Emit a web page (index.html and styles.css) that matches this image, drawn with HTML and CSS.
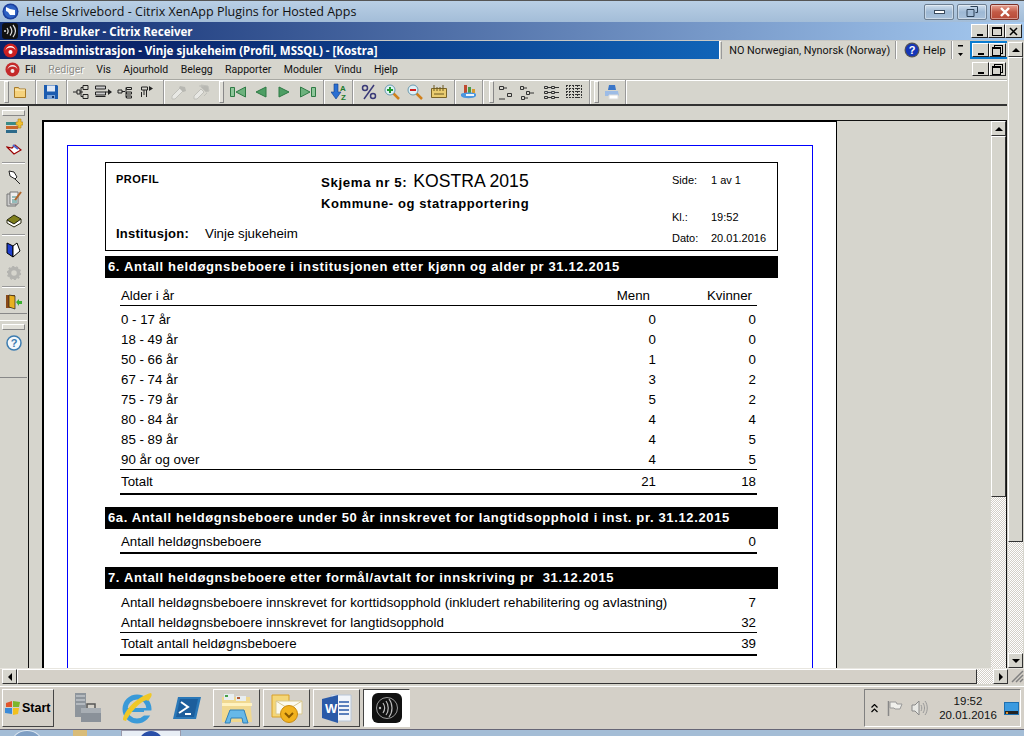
FILE: index.html
```html
<!DOCTYPE html>
<html lang="no">
<head>
<meta charset="utf-8">
<title>Profil</title>
<link rel="stylesheet" href="styles.css">
</head>
<body>
<div class="screen">
  <header class="aero">
    <svg class="aero-icon" width="17" height="17" viewBox="0 0 17 17"><circle cx="8.5" cy="8.5" r="8" fill="#1c3f9c"/><circle cx="8.5" cy="8.5" r="6.5" fill="#2f62c4"/><path d="M4 4l4 2 5 1v5H8L6 9 4 8z" fill="#fff"/></svg>
    <span class="aero-title">Helse Skrivebord - Citrix XenApp Plugins for Hosted Apps</span>
    <div class="aero-btns">
      <div class="aero-btn"><span class="aero-min"></span></div>
      <div class="aero-btn"><svg width="12" height="11" viewBox="0 0 12 11"><path d="M4.5.5h7v6h-2M1 3.5h7v7H1z" fill="none" stroke="#2a3f55"/></svg></div>
      <div class="aero-btn aero-close"><svg width="12" height="10" viewBox="0 0 12 10"><path d="M2 1l8 8M10 1L2 9" stroke="#fff" stroke-width="2.4"/></svg></div>
    </div>
  </header>

  <div class="citrix-bar">
    <svg class="citrix-icon" width="16" height="16" viewBox="0 0 16 16"><rect width="16" height="16" rx="3" fill="#111"/><path d="M5 5c1.500 2 1.500 4 0 6M8 3.500c2.500 3 2.500 6 0 9M11 2c3.300 4 3.300 8 0 12" fill="none" stroke="#ddd" stroke-width="1.200"/><circle cx="3" cy="8" r="1" fill="#ddd"/></svg>
    <span class="bar-title">Profil - Bruker - Citrix Receiver</span>
    <div class="win-btns">
      <div class="win-btn"><span class="glyph-min"></span></div>
      <div class="win-btn"><span class="glyph-max"></span></div>
      <div class="win-btn"><svg width="9" height="9" viewBox="0 0 9 9"><path d="M1 1l7 7M8 1L1 8" stroke="#000" stroke-width="1.500"/></svg></div>
    </div>
  </div>

  <div class="app">
    <div class="app-main">
      <div class="title-row">
        <div class="app-title">
          <svg class="logo" width="15" height="15" viewBox="0 0 15 15"><circle cx="7.500" cy="7.500" r="7" fill="#cc2020"/><path d="M2.500 8a5 5 0 0 1 10 0 5 3.500 0 0 0-10 0z" fill="#fff"/><circle cx="7.500" cy="9" r="2" fill="#fff"/></svg>
          <span class="bar-title">Plassadministrasjon - Vinje sjukeheim (Profil, MSSQL) - [Kostra]</span>
        </div>
        <div class="grip-v"></div>
        <span class="lang">NO Norwegian, Nynorsk (Norway)</span>
        <div class="sep-h"></div>
        <svg class="help-icon" width="16" height="16" viewBox="0 0 16 16"><circle cx="8" cy="8" r="7.500" fill="#555"/><circle cx="8" cy="8" r="6.300" fill="#1536b8"/><text x="8" y="12" font-size="11" font-weight="700" fill="#fff" text-anchor="middle" font-family="Liberation Sans">?</text></svg>
        <span class="help">Help</span>
        <div class="sep-h sep-help"></div>
        <svg class="chev" width="7" height="16" viewBox="0 0 7 16"><path d="M1 3h5v1.500H1zM1 11h5L3.500 14z" fill="#000"/></svg>
        <div class="mdi-focus">
          <div class="win-btn"><span class="glyph-min"></span></div>
          <div class="win-btn"><span class="glyph-restore"></span></div>
        </div>
      </div>

      <div class="menu">
        <svg class="logo menu-logo" width="15" height="15" viewBox="0 0 15 15"><circle cx="7.500" cy="7.500" r="7" fill="#c42a2a"/><path d="M2.500 8a5 5 0 0 1 10 0 5 3.500 0 0 0-10 0z" fill="#eee"/><circle cx="7.500" cy="9" r="2" fill="#eee"/></svg>
        <div class="menu-items">
          <span>Fil</span><span class="disabled">Rediger</span><span>Vis</span><span>Ajourhold</span><span>Belegg</span><span>Rapporter</span><span>Moduler</span><span>Vindu</span><span>Hjelp</span>
        </div>
        <div class="menu-btns">
          <div class="win-btn"><span class="glyph-min"></span></div>
          <div class="win-btn"><span class="glyph-restore"></span></div>
        </div>
      </div>

      <div class="toolbar">
        <div class="grip-t ml4"></div>
        <svg class="ml3" width="16" height="16" viewBox="0 0 16 16"><path d="M2.500 13.500v-10h4l1 1.500h6v8.500z" fill="#f5d27e" stroke="#a87a28"/><path d="M3 6h10" stroke="#fff1c4"/></svg>
        <div class="sep ml7"></div>
        <svg class="ml6" width="16" height="16" viewBox="0 0 16 16"><path d="M1 1h13l1 1v13H1z" fill="#1c5cb0"/><path d="M4 1.500h8v6H4z" fill="#dfe8f5"/><path d="M4 11h8v4H4z" fill="#7ba4d8"/><path d="M9 12h2v2H9z" fill="#12356e"/></svg>
        <div class="sep ml7"></div>
        <svg class="ml5" width="16" height="16" viewBox="0 0 16 16"><path d="M10 1.500h5v4h-5zM10 10.500h5v4h-5zM0 8h4M4 6v4h3V6zM7 8h3M8 3.500h2M8 3.500v9h2" fill="none" stroke="#222"/></svg>
        <svg class="ml6" width="17" height="16" viewBox="0 0 17 16"><path d="M.5 2h10v3H.5zM.5 8h10v3H.5zM.5 12.500h10" fill="#ccc" stroke="#222"/><path d="M10 8h4" stroke="#222"/><path d="M13 5l4 3-4 3z" fill="#222"/></svg>
        <svg class="ml5" width="16" height="16" viewBox="0 0 16 16"><path d="M9.500 3.500h5v2h-5zM9.500 8h5v2h-5zM9.500 12h5v2h-5zM1 6h4v3H1zM5 7.500h3M9 3.500v10" fill="none" stroke="#222"/></svg>
        <svg class="ml7" width="14" height="16" viewBox="0 0 14 16"><path d="M1.500 3h6v3h-6zM1.500 8v5M6.500 6v7M4 6v5" fill="none" stroke="#222"/><path d="M9 2l4 2.500L9 7z" fill="#222"/></svg>
        <div class="sep ml9"></div>
        <svg class="ml5" width="17" height="16" viewBox="0 0 17 16"><path d="M2 12l8-8 3 3-8 8H2z" fill="#e8e8e4" stroke="#c0c0ba"/><path d="M10 2l5 1 1 4-3 1-4-4z" fill="#b8b8b2"/></svg>
        <svg class="ml6" width="17" height="16" viewBox="0 0 17 16"><path d="M1 12l7-7 3 3-7 7H1z" fill="#e8e8e4" stroke="#c0c0ba"/><path d="M8 1l7 1 1 5-3 1-5-5zM6 2h5M14 9l-3 3" fill="#b8b8b2" stroke="#c0c0ba"/></svg>
        <div class="grip-t ml9"></div>
        <svg class="ml6" width="16" height="16" viewBox="0 0 16 16"><path d="M.5 3.500h4v9h-4z" fill="#8fc79a" stroke="#2e7a44"/><path d="M15.500 3v10L6 8z" fill="#6db27d" stroke="#2e7a44"/></svg>
        <svg class="ml8" width="13" height="16" viewBox="0 0 13 16"><path d="M12 3v10L2 8z" fill="#4e9e64" stroke="#2e7a44"/></svg>
        <svg class="ml11" width="13" height="16" viewBox="0 0 13 16"><path d="M1 3v10l10-5z" fill="#4e9e64" stroke="#2e7a44"/></svg>
        <svg class="ml9" width="16" height="16" viewBox="0 0 16 16"><path d="M.5 3v10L10 8z" fill="#6db27d" stroke="#2e7a44"/><path d="M11.500 3.500h4v9h-4z" fill="#8fc79a" stroke="#2e7a44"/></svg>
        <div class="sep ml7"></div>
        <svg class="ml6" width="17" height="18" viewBox="0 0 17 18"><path d="M3 1h4v8h3l-5 7-5-7h3z" fill="#2a6fd2" stroke="#123e88" stroke-width=".6"/><text x="9" y="8" font-size="8" font-weight="700" fill="#1d7a2c" font-family="Liberation Sans">A</text><text x="10" y="17" font-size="8" font-weight="700" fill="#1d7a2c" font-family="Liberation Sans">Z</text></svg>
        <div class="sep ml4"></div>
        <svg class="ml7" width="16" height="16" viewBox="0 0 16 16"><circle cx="4" cy="4" r="2.500" fill="none" stroke="#3a3a78" stroke-width="1.500"/><circle cx="12" cy="12" r="2.500" fill="none" stroke="#3a3a78" stroke-width="1.500"/><path d="M13 1L3 15" stroke="#3a3a78" stroke-width="1.500"/></svg>
        <svg class="ml7" width="16" height="16" viewBox="0 0 16 16"><path d="M9 9l6 6" stroke="#d0801c" stroke-width="2.500"/><circle cx="6" cy="6" r="5" fill="#dff0f6" stroke="#6a9ab0"/><path d="M3 6h6M6 3v6" stroke="#1c9a30" stroke-width="2"/></svg>
        <svg class="ml7" width="16" height="16" viewBox="0 0 16 16"><path d="M9 9l6 6" stroke="#d0801c" stroke-width="2.500"/><circle cx="6" cy="6" r="5" fill="#dff0f6" stroke="#6a9ab0"/><path d="M3 6h6" stroke="#d02020" stroke-width="2"/></svg>
        <svg class="ml8" width="16" height="16" viewBox="0 0 16 16"><path d="M.5 4.500h15v9H.5z" fill="#e9cc70" stroke="#7a6428"/><path d="M3 1v6M6 3v4M9 3v4M12 1v6M3 10h10" stroke="#6a5820"/></svg>
        <div class="sep ml7"></div>
        <svg class="ml5" width="16" height="17" viewBox="0 0 16 17"><path d="M3 1h3v8H3z" fill="#c04a30"/><path d="M7 3h3v6H7z" fill="#4a9a4a"/><path d="M11 5h3v4h-3z" fill="#d89a30"/><path d="M0 10c2-2 14-2 15 0v2c-2 3-13 3-15 0z" fill="#4a96e0"/><path d="M5 10h8v2H5z" fill="#eef4fb"/></svg>
        <div class="sep ml5"></div>
        <div class="grip-t ml5"></div>
        <svg class="ml4" width="16" height="16" viewBox="0 0 16 16"><path d="M1.500 2.500h4v3h-4zM9.500 9.500h4v3h-4zM6 4h3M1 15h6" fill="none" stroke="#333"/></svg>
        <svg class="ml5" width="16" height="16" viewBox="0 0 16 16"><path d="M1.500 2.500h3v3h-3zM7.500 7.500h3v3h-3zM2.500 12.500h3v3h-3zM5 4h3M11 9h4M6 14h3" fill="none" stroke="#333"/></svg>
        <svg class="ml9" width="16" height="16" viewBox="0 0 16 16"><path d="M.5 2.500h3v2h-3zM7.500 2.500h3v2h-3zM.5 7.500h3v2h-3zM7.500 7.500h3v2h-3zM.5 12.500h3v2h-3zM7.500 12.500h3v2h-3zM4 3.500h3M11 3.500h4M4 8.500h3M11 8.500h4M4 13.500h3M11 13.500h4" fill="none" stroke="#333"/></svg>
        <svg class="ml6" width="16" height="16" viewBox="0 0 16 16"><path d="M0 1.500h16M0 4.500h16M0 7.500h16M0 10.500h16M0 13.500h16M.5 1v13M3.500 1v13M7.500 1v13M11.500 1v13M15.500 1v13" stroke="#333" stroke-dasharray="2 1" fill="none"/></svg>
        <div class="sep ml7"></div>
        <div class="grip-t ml3"></div>
        <svg class="ml5" width="16" height="16" viewBox="0 0 16 16"><path d="M5 1h6l1 5H4z" fill="#3a76c8"/><path d="M1 7h13l1 5H1z" fill="#9dbce6"/><path d="M5 11h9v4H5z" fill="#fff" stroke="#dcdcdc"/></svg>
        <div class="sep ml5"></div>
      </div>

      <div class="workspace">
        <aside class="sidebar">
          <div class="side-panel">
            <div class="grip-s"></div>
            <svg class="side-icon" width="18" height="16" viewBox="0 0 18 16"><path d="M1 4h10v3H1z" fill="#3a8a86"/><path d="M1 8h12v3H1z" fill="#c8662c"/><path d="M1 12h11v3H1z" fill="#2c6a8a"/><path d="M13 1h3v3h2v3h-2v3h-3V7h-2V4h2z" fill="#f0c030" stroke="#b08018" stroke-width=".6"/></svg>
            <svg class="side-icon mt8" width="16" height="14" viewBox="0 0 16 14"><path d="M1 5l7 7 7-4-6-5-3 3z" fill="#fff" stroke="#900" stroke-width="1.200"/><path d="M7 3l5 4" stroke="#4a6ad0" stroke-width="2"/></svg>
            <div class="sep-s"></div>
            <svg class="side-icon mt6" width="14" height="14" viewBox="0 0 14 14"><path d="M2 1l5 1 3 5-2 2-5-3-1-5zM8 9l5 5" fill="#fff" stroke="#222"/></svg>
            <svg class="side-icon mt7" width="16" height="16" viewBox="0 0 16 16"><path d="M1 3h9v12H1z" fill="#ccc" stroke="#777"/><path d="M4 1h8v12H4z" fill="#eee" stroke="#777"/><path d="M6 6h5M6 9h5M6 11h5" stroke="#3a8a86"/><path d="M9 9l6-8" stroke="#b0662c" stroke-width="2"/></svg>
            <svg class="side-icon mt7" width="16" height="14" viewBox="0 0 16 14"><path d="M1 6l7-5 7 4-7 5z" fill="#7f7f1c" stroke="#2a2a10"/><path d="M1 6v3l7 4 7-4V5l-7 5z" fill="#fff" stroke="#2a2a10"/></svg>
            <div class="sep-s"></div>
            <svg class="side-icon mt6" width="15" height="16" viewBox="0 0 15 16"><path d="M1 1l6 3v11l-6-4z" fill="#1f3fd0" stroke="#000"/><path d="M7 4l4-3 3 8-7 6z" fill="#fff" stroke="#000"/></svg>
            <svg class="side-icon mt8" width="14" height="14" viewBox="0 0 14 14"><circle cx="7" cy="7" r="4.500" fill="none" stroke="#b4b4b0" stroke-width="3.500"/><circle cx="7" cy="7" r="6.500" fill="none" stroke="#b4b4b0" stroke-width="1.500" stroke-dasharray="2 2"/></svg>
            <div class="sep-s"></div>
            <svg class="side-icon mt6" width="16" height="16" viewBox="0 0 16 16"><path d="M0 1h9v13H0z" fill="#8a4a18"/><path d="M3 1l6 1v13l-6-2z" fill="#e8b020" stroke="#222" stroke-width=".7"/><path d="M10 8l3-3v2h3v3h-3v2z" fill="#3ab030"/></svg>
          </div>
          <div class="side-panel side-help">
            <div class="grip-s"></div>
            <svg class="side-icon" width="16" height="16" viewBox="0 0 16 16"><circle cx="8" cy="8" r="7" fill="#f4f8fb" stroke="#3c7cb0" stroke-width="1.500"/><text x="8" y="12" font-size="11" font-weight="700" fill="#3c7cb0" text-anchor="middle" font-family="Liberation Sans">?</text></svg>
          </div>
        </aside>

        <div class="mdi">
          <div class="mdi-band"></div>
          <div class="view">
            <div class="page">
              <div class="frame">
                <div class="report">
                  <div class="head-box">
                    <div class="head-left">
                      <div class="profil">PROFIL</div>
                      <div class="inst"><b>Institusjon:</b><span>Vinje sjukeheim</span></div>
                    </div>
                    <div class="head-mid">
                      <div class="skjema"><b>Skjema nr 5:</b><span class="kostra">KOSTRA 2015</span></div>
                      <div class="kommune">Kommune- og statrapportering</div>
                    </div>
                    <dl class="head-right">
                      <dt>Side:</dt><dd>1 av 1</dd>
                      <dt>Kl.:</dt><dd>19:52</dd>
                      <dt>Dato:</dt><dd>20.01.2016</dd>
                    </dl>
                  </div>

                  <h2 class="sec sec-6">6. Antall heldøgnsbeboere i institusjonen etter kjønn og alder pr 31.12.2015</h2>
                  <div class="tbl">
                    <div class="row th"><span>Alder i år</span><span class="n n-m">Menn</span><span class="n n-k">Kvinner</span></div>
                    <div class="row first"><span>0 - 17 år</span><span class="n">0</span><span class="n">0</span></div>
                    <div class="row"><span>18 - 49 år</span><span class="n">0</span><span class="n">0</span></div>
                    <div class="row"><span>50 - 66 år</span><span class="n">1</span><span class="n">0</span></div>
                    <div class="row"><span>67 - 74 år</span><span class="n">3</span><span class="n">2</span></div>
                    <div class="row"><span>75 - 79 år</span><span class="n">5</span><span class="n">2</span></div>
                    <div class="row"><span>80 - 84 år</span><span class="n">4</span><span class="n">4</span></div>
                    <div class="row"><span>85 - 89 år</span><span class="n">4</span><span class="n">5</span></div>
                    <div class="row"><span>90 år og over</span><span class="n">4</span><span class="n">5</span></div>
                    <div class="row total"><span>Totalt</span><span class="n">21</span><span class="n">18</span></div>
                  </div>

                  <h2 class="sec sec-6a">6a. Antall heldøgnsbeboere under 50 år innskrevet for langtidsopphold i inst. pr. 31.12.2015</h2>
                  <div class="tbl">
                    <div class="row single"><span>Antall heldøgnsbeboere</span><span class="n"></span><span class="n">0</span></div>
                  </div>

                  <h2 class="sec sec-7">7. Antall heldøgnsbeboere etter formål/avtalt for innskriving pr&nbsp; 31.12.2015</h2>
                  <div class="tbl tbl-7">
                    <div class="row"><span class="wide">Antall heldøgnsbeboere innskrevet for korttidsopphold (inkludert rehabilitering og avlastning)</span><span class="n">7</span></div>
                    <div class="row"><span class="wide">Antall heldøgnsbeboere innskrevet for langtidsopphold</span><span class="n">32</span></div>
                    <div class="row total"><span class="wide">Totalt antall heldøgnsbeboere</span><span class="n">39</span></div>
                  </div>
                </div>
              </div>
            </div>
            <div class="view-rest"></div>
            <div class="vscroll inner">
              <div class="sb-btn"><span class="arrow-up"></span></div>
              <div class="thumb"></div>
              <div class="dither"></div>
            </div>
          </div>
        </div>
      </div>
    </div>

    <div class="vscroll outer">
      <div class="sb-btn"><span class="arrow-up"></span></div>
      <div class="thumb"></div>
      <div class="dither"></div>
      <div class="sb-btn"><span class="arrow-down"></span></div>
    </div>
  </div>

  <div class="hscroll">
    <div class="sb-btn"><span class="arrow-left"></span></div>
    <div class="hthumb"></div>
    <div class="dither"></div>
    <div class="sb-btn"><span class="arrow-right"></span></div>
    <svg class="grip-corner" width="14" height="14" viewBox="0 0 14 14"><path d="M13 2L2 13M13 6l-7 7M13 10l-3 3" stroke="#808080" stroke-width="1.500"/></svg>
  </div>

  <div class="taskbar">
    <div class="start">
      <svg width="16" height="16" viewBox="0 0 16 16"><path d="M1 3l6-2v6H1z" fill="#e0552c"/><path d="M8 1l7 1-1 5H8z" fill="#7cb62c"/><path d="M0 8h7v6l-7-1z" fill="#3a8ad8"/><path d="M8 8h6l-1 6-5 1z" fill="#f2c01e"/></svg>
      <b>Start</b>
    </div>
    <svg class="task-icon i-tools" width="30" height="33" viewBox="0 0 30 33"><path d="M2 1h11v24H2z" fill="#8e959c"/><path d="M3 4h9M3 8h9M3 12h9" stroke="#d8dce0"/><path d="M8 16h20v14H8z" fill="#8a9199"/><path d="M8 16h20v5H8z" fill="#a8aeb4"/><path d="M14 16v-4h8v4" fill="none" stroke="#555" stroke-width="1.500"/></svg>
    <svg class="task-icon i-ie" width="32" height="32" viewBox="0 0 32 32"><ellipse cx="15" cy="17" rx="12" ry="12" fill="none" stroke="#3a9ad8" stroke-width="5"/><path d="M4 18h23" stroke="#3a9ad8" stroke-width="4"/><path d="M22 21h8" stroke="#d4d0c8" stroke-width="5"/><path d="M1 28C1 20 14 5 29 1c2 2-1 6-3 8-2-4-16 8-22 20z" fill="#f0c828"/></svg>
    <svg class="task-icon i-ps" width="28" height="24" viewBox="0 0 28 24"><path d="M5 1h23l-5 22H0z" fill="#2a78b8"/><path d="M7 3h18l-4 18H3z" fill="#1d5e9c"/><path d="M8 6l7 5-9 6M12 18h6" fill="none" stroke="#fff" stroke-width="2"/></svg>
    <div class="task-btn t-first"><svg width="32" height="31" viewBox="0 0 32 31"><path d="M1 4h28l2 25H1z" fill="#f0d890"/><path d="M3 1h10v6H3zM15 3h10v5H15z" fill="#e8eef0"/><path d="M4 2h3v2H4z" fill="#48a048"/><path d="M16 4h3v2h-3z" fill="#b05a38"/><path d="M1 10h30v3H1z" fill="#fff2c0"/><path d="M9 17h14l4 13h-5l-1-5H10l-1 5H4z" fill="#66b8e8" stroke="#3080b8"/></svg></div>
    <div class="task-btn"><svg width="32" height="31" viewBox="0 0 32 31"><path d="M1 2h17v22H1z" fill="#f4d678" stroke="#d8a028"/><path d="M5 8h26v13H5z" fill="#fbfaf0" stroke="#d8c890"/><path d="M5 8l13 8 13-8" fill="none" stroke="#d8c890"/><circle cx="18" cy="21" r="8.500" fill="#f2b21e" stroke="#c88a10"/><path d="M14 20l4 4 4-4" fill="none" stroke="#8a5a00" stroke-width="2"/></svg></div>
    <div class="task-btn"><svg width="32" height="31" viewBox="0 0 32 31"><path d="M10 2h20v26H10z" fill="#f2f5f9" stroke="#b8c6d8"/><path d="M1 6l16-4v28L1 25z" fill="#2a5aa8"/><text x="4" y="20" font-size="13" font-weight="700" fill="#fff" font-family="Liberation Sans">W</text><path d="M18 9h10M18 13h10M18 17h10M18 21h10" stroke="#2a5aa8" stroke-width="1.500"/></svg></div>
    <div class="task-btn active"><svg width="30" height="30" viewBox="0 0 30 30"><rect width="30" height="30" rx="6" fill="#111"/><circle cx="15" cy="15" r="10.500" fill="none" stroke="#999"/><path d="M11 10c2 3 2 7 0 10M14 8c3 4 3 10 0 14M17 6c4 5 4 13 0 18" fill="none" stroke="#bbb" stroke-width="1.200"/><circle cx="8" cy="15" r="1.200" fill="#bbb"/></svg></div>
    <div class="tray">
      <svg class="tray-chev" width="7" height="9" viewBox="0 0 7 9"><path d="M.5 3.500L3.500.5l3 3M.5 8L3.500 5l3 3" fill="none" stroke="#000" stroke-width="1.200"/></svg>
      <svg class="tray-flag" width="16" height="17" viewBox="0 0 16 17"><path d="M1.500 1v15" stroke="#888" stroke-width="1.500"/><path d="M3 2h6l1 2h5l-2 5H8L7 8H3z" fill="#f0f0ec" stroke="#999"/></svg>
      <svg class="tray-sound" width="17" height="16" viewBox="0 0 17 16"><path d="M1 5h3l4-4v14l-4-4H1z" fill="#e8e8e4" stroke="#888"/><path d="M10 5c1 2 1 4 0 6M12 3c2 3 2 7 0 10M14 1c3 4 3 10 0 14" fill="none" stroke="#999"/></svg>
      <div class="clock"><span>19:52</span><span>20.01.2016</span></div>
      <svg class="tray-desk" width="15" height="13" viewBox="0 0 15 13"><path d="M0 0h15v13H0z" fill="#1d6fb0"/><path d="M1 1h13v8H1z" fill="#3a9ae0"/><path d="M1 9h13v3H1z" fill="#222"/><path d="M2 10h2v2H2z" fill="#d89030"/></svg>
    </div>
  </div>
  <div class="strip">
    <span class="strip-orb"></span>
    <span class="strip-folder"></span>
    <div class="strip-tab"><span class="strip-dot"></span></div>
  </div>
</div>
</body>
</html>
```

FILE: styles.css
```css
* { box-sizing: border-box; }
html, body { margin: 0; padding: 0; background: #d6d5cd; overflow: hidden; }
body { width: 1024px; height: 736px; font-family: "Liberation Sans", Arial, sans-serif; color: #000; }
svg { display: block; flex: none; }

.screen { width: 1024px; height: 736px; display: flex; flex-direction: column; overflow: hidden; }

/* Aero title */
.aero { height: 22px; display: flex; align-items: center; padding-left: 2px; border-top: 1px solid #555; background: linear-gradient(#b9cfe5, #a3bdd8); }
.aero-title { font: 12.5px "Open Sans", sans-serif; margin-left: 7px; color: #111; }
.aero-btns { margin-left: auto; display: flex; gap: 3px; margin-right: 5px; }
.aero-btn { width: 30px; height: 16px; border: 1px solid #6d7f92; border-radius: 2px; background: linear-gradient(#d2e0ee, #9db8d4 50%, #a9c1da); display: flex; align-items: center; justify-content: center; box-shadow: inset 0 0 0 1px rgba(255,255,255,.4); }
.aero-min { width: 11px; height: 4px; background: #fff; border: 1px solid #3a4a5c; }
.aero-close { width: 29px; background: linear-gradient(#e8a394, #c35a46 50%, #b84a38); border-color: #7a3028; }

/* Nested window caption bars */
.citrix-bar { height: 19px; display: flex; align-items: center; padding-left: 2px; border-bottom: 1px solid #c8c8c4; background: linear-gradient(90deg, #0d2a70, #a6caf0); }
.bar-title { font: 700 11.5px "Noto Sans", sans-serif; color: #fff; white-space: nowrap; margin-left: 2px; }
.citrix-bar .win-btns { margin-left: auto; margin-right: 2px; display: flex; }

.win-btn { width: 17px; height: 14px; background: #d6d5cd; border: 1px solid; border-color: #fff #222 #222 #fff; display: flex; align-items: center; justify-content: center; }
.win-btns .win-btn { width: 17px; }
.glyph-min { width: 6px; height: 2px; background: #000; margin-top: 7px; }
.glyph-max { width: 10px; height: 9px; border: 1px solid #000; border-top-width: 2px; }
.glyph-restore { width: 9px; height: 9px; border: 1px solid #000; border-top-width: 2px; box-shadow: 2px -2px 0 -1px #d6d5cd, 2px -2px 0 0 #000; margin: 2px 2px 0 0; }

/* App window */
.app { height: 627px; display: flex; }
.app-main { width: 1007px; display: flex; flex-direction: column; }
.title-row { height: 18px; display: flex; align-items: center; background: #d6d5cd; }
.app-title { width: 720px; height: 18px; display: flex; align-items: center; padding-left: 3px; background: linear-gradient(90deg, #0a246a, #0a246a 20%, #1064b8); }
.logo { flex: none; }
.grip-v { width: 3px; height: 19px; border: 1px solid; border-color: #fff #999 #999 #fff; }
.lang { font: 10.8px Roboto, sans-serif; margin-left: 7px; width: 166px; white-space: nowrap; color: #111; }
.sep-h { width: 2px; height: 19px; border-left: 1px solid #999; border-right: 1px solid #fff; flex: none; }
.help-icon { margin-left: 7px; }
.help { font: 11px Roboto, sans-serif; margin-left: 3px; width: 21px; color: #111; }
.sep-help { margin-left: 7px; }
.chev { margin-left: 4px; }
.mdi-focus { display: flex; margin-left: 6px; width: 37px; height: 18px; border: 2px solid #0a7cd0; border-right-width: 0; align-items: center; }

.menu { height: 20px; display: flex; align-items: center; padding-left: 5px; background: #d6d5cd; }
.menu-items { display: flex; gap: 12.4px; margin-left: 5px; font: 10.5px Roboto, sans-serif; color: #111; }
.menu-items .disabled { color: #8c8c88; text-shadow: 1px 1px 0 #fff; }
.menu-btns { margin-left: auto; display: flex; margin-right: 1px; }

.toolbar { height: 27px; display: flex; align-items: center; background: #d6d5cd; border-top: 1px solid #a8a8a2; border-bottom: 2px solid #333; box-shadow: inset 0 1px 0 #fff; }
.sep { width: 2px; height: 24px; border-left: 1px solid #999; border-right: 1px solid #fff; }
.grip-t { width: 5px; height: 22px; border: 1px solid; border-color: #fff #888 #888 #fff; background: #e0dfd8; }
.ml3 { margin-left: 3px; } .ml4 { margin-left: 4px; } .ml5 { margin-left: 5px; } .ml6 { margin-left: 6px; } .ml7 { margin-left: 7px; } .ml8 { margin-left: 8px; } .ml9 { margin-left: 9px; } .ml11 { margin-left: 11px; }

.workspace { flex: 1; display: flex; min-height: 0; }
.sidebar { width: 28px; display: flex; flex-direction: column; background: #d6d5cd; }
.side-panel { width: 27px; height: 208px; padding-top: 4px; border-bottom: 1px solid #888; display: flex; flex-direction: column; align-items: center; box-shadow: inset 0 1px 0 #fff; }
.side-help { height: 58px; margin-top: 6px; }
.grip-s { width: 23px; height: 6px; border: 1px solid; border-color: #fff #888 #888 #fff; background: #e0dfd8; margin-bottom: 2px; flex: none; }
.side-help .grip-s { margin-bottom: 5px; }
.side-icon { flex: none; }
.sep-s { width: 23px; height: 2px; border-top: 1px solid #999; border-bottom: 1px solid #fff; margin-top: 6px; flex: none; }
.mt6 { margin-top: 6px; } .mt7 { margin-top: 7px; } .mt8 { margin-top: 8px; }

.mdi { flex: 1; display: flex; flex-direction: column; border-left: 1px solid #111; min-width: 0; }
.mdi-band { height: 14px; background: #d6d5cd; }
.view { flex: 1; display: flex; min-height: 0; padding-left: 13px; background: #d6d5cd; border-right: 1px solid #111; }
.page { width: 795px; background: #fff; border: 1px solid #000; border-top-width: 2px; border-left-width: 2px; border-bottom: 0; overflow: hidden; }
.frame { width: 746px; height: 600px; margin: 23px 0 0 23px; padding: 16px 0 0 37px; border: 1px solid #0000ff; border-bottom: 0; }
.view-rest { width: 154px; border-top: 1px solid #111; }

/* Report */
.report { width: 673px; }
.head-box { height: 89px; border: 1px solid #000; display: flex; padding-left: 10px; }
.head-left { width: 205px; display: flex; flex-direction: column; justify-content: space-between; padding: 10px 0 9px; }
.profil { font-weight: 700; font-size: 11px; letter-spacing: .5px; }
.inst { display: flex; align-items: baseline; font-size: 13.3px; }
.inst b { width: 89px; font-size: 13px; letter-spacing: .25px; }
.head-mid { width: 351px; padding-top: 8px; }
.skjema { display: flex; align-items: baseline; gap: 6px; }
.skjema b { font-size: 13.3px; letter-spacing: .6px; }
.kostra { font-size: 17.6px; }
.kommune { font-weight: 700; font-size: 13px; letter-spacing: .6px; margin-top: 4px; }
.head-right { margin: 8px 0 0; display: grid; grid-template-columns: 39px 1fr; grid-template-rows: 15px 37px 21px; font-size: 11px; align-items: end; height: 73px; }
.head-right dd { margin: 0; }

.sec { margin: 0; height: 22px; line-height: 22px; background: #000; color: #fff; font-size: 13px; font-weight: 700; padding-left: 3px; letter-spacing: .64px; white-space: nowrap; }
.sec-6 { margin-top: 5px; }
.sec-6a { margin-top: 12px; }
.sec-7 { margin-top: 13px; }

.tbl { margin-left: 15px; width: 637px; }
.row { display: grid; grid-template-columns: 1fr 100px 101px; height: 20px; align-items: center; padding-left: 1px; font-size: 13.3px; white-space: nowrap; }
.n { text-align: right; }
.th { height: 28px; padding-top: 7px; border-bottom: 1px solid #000; }
.n-m { padding-right: 6px; }
.first { margin-top: 3px; }
.n:last-child { padding-right: 1px; }
.th .n-k:last-child { padding-right: 5px; }
.total { height: 26px; border-top: 1px solid #000; border-bottom: 2px solid #000; }
.single { height: 25px; padding-top: 2px; border-bottom: 2px solid #000; }
.tbl-7 { padding-top: 3px; }
.tbl-7 .row { grid-template-columns: 1fr 40px; letter-spacing: .04px; }
.tbl-7 .total { height: 24px; }

/* Scrollbars */
.vscroll { display: flex; flex-direction: column; }
.vscroll.inner { width: 15px; border-top: 1px solid #111; }
.vscroll.outer { width: 17px; padding: 1px 1px 0 1px; }
.sb-btn { flex: none; width: 15px; height: 15px; background: #d6d5cd; border: 1px solid; border-color: #fff #333 #333 #fff; display: flex; align-items: center; justify-content: center; }
.thumb { flex: none; background: #d6d5cd; border: 1px solid; border-color: #fff #333 #333 #fff; }
.inner .thumb { height: 361px; }
.outer .thumb { height: 485px; }
.dither { flex: 1; background: repeating-conic-gradient(#d4d0c8 0 25%, #fff 0 50%) 0 0 / 2px 2px; }
.arrow-up { border: 4px solid transparent; border-top: 0; border-bottom: 4px solid #000; }
.arrow-down { border: 4px solid transparent; border-bottom: 0; border-top: 4px solid #000; }
.arrow-left { border: 4px solid transparent; border-left: 0; border-right: 4px solid #000; }
.arrow-right { border: 4px solid transparent; border-right: 0; border-left: 4px solid #000; }

.hscroll { height: 16px; display: flex; padding-left: 2px; background: #d4d0c8; border-top: 1px solid #e8e6e0; }
.hthumb { width: 960px; background: #d4d0c8; border: 1px solid; border-color: #fff #333 #333 #fff; flex: none; }
.hscroll .dither { flex: none; width: 16px; }
.grip-corner { margin-left: 2px; }

/* Taskbar */
.taskbar { margin-top: 2px; height: 43px; display: flex; align-items: center; padding-left: 2px; background: #d4d0c8; border-top: 1px solid #fff; }
.start { width: 52px; height: 38px; border: 1px solid; border-color: #fff #444 #444 #fff; display: flex; align-items: center; padding-left: 2px; gap: 1px; font-size: 12.5px; }
.task-icon { flex: none; }
.i-tools { margin-left: 19px; }
.i-ie { margin-left: 19px; }
.i-ps { margin-left: 19px; }
.task-btn { width: 47px; height: 38px; border: 1px solid; border-color: #fff #444 #444 #fff; margin-left: 3px; display: flex; align-items: center; justify-content: center; }
.t-first { margin-left: 12px; }
.task-btn.active { background: #fff; border-color: #444 #fff #fff #444; }
.tray { margin-left: 454px; width: 157px; height: 38px; border: 1px solid; border-color: #808080 #fff #fff #808080; display: flex; align-items: center; }
.tray-chev { margin-left: 6px; }
.tray-flag { margin-left: 9px; }
.tray-sound { margin-left: 8px; }
.clock { margin-left: 12px; width: 56px; display: flex; flex-direction: column; align-items: center; font-size: 11.5px; line-height: 14px; color: #111; }
.tray-desk { margin-left: 8px; }

.strip { height: 7px; display: flex; background: #a4bdd6; border-top: 1px solid #667; overflow: hidden; }
.strip-orb { width: 30px; height: 24px; margin-left: 12px; border-radius: 50%; border: 1px solid #dfe9f2; background: #7f9fc4; }
.strip-folder { width: 14px; height: 7px; margin-left: 31px; background: #d9bc78; }
.strip-tab { width: 60px; height: 7px; margin-left: 34px; background: #e8eef5; border: 1px solid #99a; border-bottom: 0; display: flex; justify-content: center; }
.strip-dot { width: 24px; height: 24px; border-radius: 50%; background: #2a4fa8; }
```
